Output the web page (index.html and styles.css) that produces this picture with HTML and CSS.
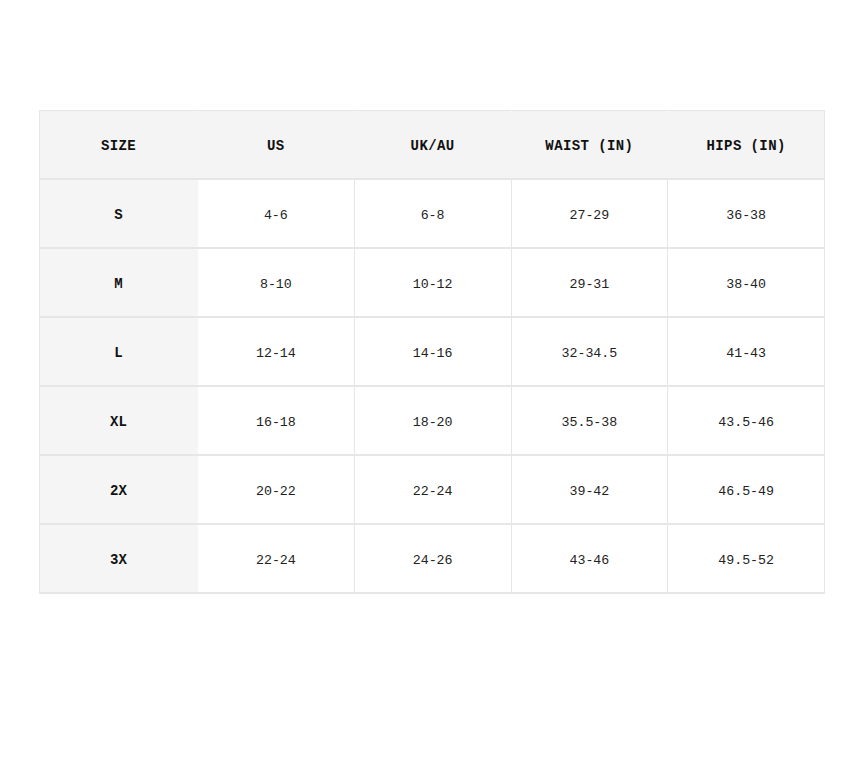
FILE: index.html
```html
<!DOCTYPE html>
<html>
<head>
<meta charset="utf-8">
<link rel="stylesheet" href="styles.css">
</head>
<body>
<table class="size-table">
  <thead>
    <tr><th>SIZE</th><th>US</th><th>UK/AU</th><th>WAIST (IN)</th><th>HIPS (IN)</th></tr>
  </thead>
  <tbody>
    <tr><th>S</th><td>4-6</td><td>6-8</td><td>27-29</td><td>36-38</td></tr>
    <tr><th>M</th><td>8-10</td><td>10-12</td><td>29-31</td><td>38-40</td></tr>
    <tr><th>L</th><td>12-14</td><td>14-16</td><td>32-34.5</td><td>41-43</td></tr>
    <tr><th>XL</th><td>16-18</td><td>18-20</td><td>35.5-38</td><td>43.5-46</td></tr>
    <tr><th>2X</th><td>20-22</td><td>22-24</td><td>39-42</td><td>46.5-49</td></tr>
    <tr><th>3X</th><td>22-24</td><td>24-26</td><td>43-46</td><td>49.5-52</td></tr>
  </tbody>
</table>
</body>
</html>
```
FILE: styles.css
```css
html, body {
  margin: 0;
  padding: 0;
  background: #ffffff;
}
body {
  padding: 110px 0 0 39px;
  font-family: "Liberation Mono", "DejaVu Sans Mono", monospace;
  color: #111;
}
.size-table {
  border-collapse: collapse;
  width: 786px;
  table-layout: fixed;
}
.size-table th,
.size-table td {
  height: 64px;
  padding: 3px 0 0 0;
  text-align: center;
  vertical-align: middle;
  border: 1px solid #e6e6e6;
  border-top-width: 2px;
}
.size-table thead th {
  background: #f4f4f4;
  font-weight: bold;
  font-size: 14px;
  letter-spacing: 0.4px;
  border-left-color: #f4f4f4;
  border-right-color: #f4f4f4;
  border-top-width: 1px;
  height: 64px;
}
.size-table thead th:first-child { border-left-color: #e6e6e6; }
.size-table thead th:last-child { border-right-color: #e6e6e6; }
.size-table tbody th {
  background: #f5f5f5;
  font-weight: bold;
  font-size: 14px;
  border-right-color: #f5f5f5;
}
.size-table td {
  font-size: 13.3px;
  color: #222;
}
.size-table tbody tr:last-child th,
.size-table tbody tr:last-child td {
  border-bottom-width: 2px;
}
.size-table th:first-child { width: 157px; }
```
